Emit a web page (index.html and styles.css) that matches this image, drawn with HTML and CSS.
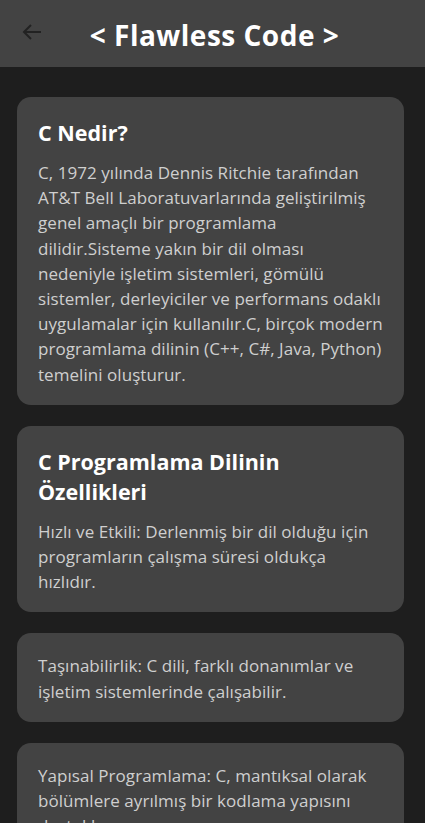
FILE: index.html
```html
<!DOCTYPE html>
<html lang="tr">
<head>
<meta charset="utf-8">
<title>Flawless Code</title>
<link rel="stylesheet" href="styles.css">
</head>
<body>
<div class="app">
  <header class="topbar">
    <button class="back" aria-label="Geri">
      <svg width="24" height="24" viewBox="0 0 24 24"><path d="M21 12H4.5M11 5l-7 7 7 7" fill="none" stroke="#222222" stroke-width="2"/></svg>
    </button>
    <h1 class="title">&lt; Flawless Code &gt;</h1>
  </header>
  <main class="content">
    <section class="card">
      <h2 class="card-title">C Nedir?</h2>
      <p class="card-text">C, 1972 yılında Dennis Ritchie tarafından AT&amp;T Bell Laboratuvarlarında geliştirilmiş genel amaçlı bir programlama dilidir.Sisteme yakın bir dil olması nedeniyle işletim sistemleri, gömülü sistemler, derleyiciler ve performans odaklı uygulamalar için kullanılır.C, birçok modern programlama dilinin (C++, C#, Java, Python) temelini oluşturur.</p>
    </section>
    <section class="card">
      <h2 class="card-title">C Programlama Dilinin Özellikleri</h2>
      <p class="card-text">Hızlı ve Etkili: Derlenmiş bir dil olduğu için programların çalışma süresi oldukça hızlıdır.</p>
    </section>
    <section class="card">
      <p class="card-text">Taşınabilirlik: C dili, farklı donanımlar ve işletim sistemlerinde çalışabilir.</p>
    </section>
    <section class="card">
      <p class="card-text">Yapısal Programlama: C, mantıksal olarak bölümlere ayrılmış bir kodlama yapısını destekler.</p>
    </section>
  </main>
</div>
</body>
</html>
```
FILE: styles.css
```css
html, body {
  margin: 0;
  padding: 0;
  background: #1e1e1e;
  height: 100%;
  overflow: hidden;
}
body {
  font-family: "Open Sans", "Noto Sans", sans-serif;
}
.app {
  min-height: 100%;
}
.topbar {
  height: 67px;
  background: #434343;
  display: flex;
  align-items: center;
  justify-content: center;
  position: relative;
  padding-left: 4px;
}
.back {
  position: absolute;
  left: 20px;
  top: 20px;
  width: 24px;
  height: 24px;
  padding: 0;
  border: 0;
  background: none;
  display: flex;
}
.title {
  margin: 0;
  color: #ffffff;
  font-size: 28px;
  font-weight: 700;
  letter-spacing: 0.5px;
  margin-top: 2px;
}
.content {
  padding: 30px 21px 0 17px;
  display: flex;
  flex-direction: column;
  gap: 21px;
}
.card {
  background: #434343;
  border-radius: 14px;
  padding: 20px 21px 18px;
}
.card-title {
  margin: 1px 0 12px;
  color: #ffffff;
  font-size: 21.5px;
  font-weight: 700;
  line-height: 30px;
}
.card-text {
  margin: 0;
  color: #cfcfcf;
  font-size: 17px;
  line-height: 25.2px;
  letter-spacing: 0.05px;
}
```
